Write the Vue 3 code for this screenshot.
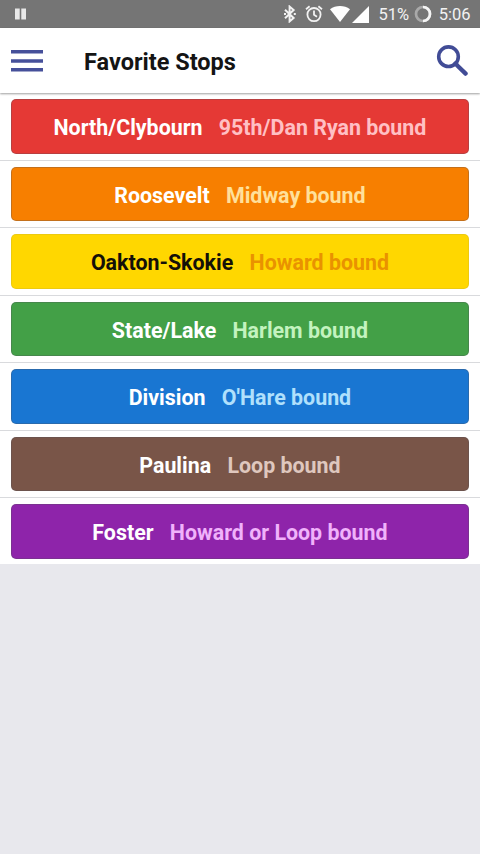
<script setup>
const stops = [
  { name: 'North/Clybourn', bound: '95th/Dan Ryan bound', line: 'red' },
  { name: 'Roosevelt', bound: 'Midway bound', line: 'orange' },
  { name: 'Oakton-Skokie', bound: 'Howard bound', line: 'yellow' },
  { name: 'State/Lake', bound: 'Harlem bound', line: 'green' },
  { name: 'Division', bound: "O'Hare bound", line: 'blue' },
  { name: 'Paulina', bound: 'Loop bound', line: 'brown' },
  { name: 'Foster', bound: 'Howard or Loop bound', line: 'purple' },
]
</script>

<template>
  <div class="screen">
    <div class="status">
      <svg class="pause" width="12" height="12" viewBox="0 0 12 12"><path d="M0 .5h4.7v11H0zM6.3.5H11v11H6.3z" /></svg>
      <div class="indicators">
        <svg class="bluetooth" width="12" height="18" viewBox="0 0 12 18"><path d="M1 4.8l8.6 8.2L5.6 16.4V1.6L9.6 5 1 13.2" /><path d="M0 9h2M9.8 9h2" /></svg>
        <svg class="alarm" width="18" height="18" viewBox="0 0 18 18">
          <circle cx="9" cy="9.6" r="6.6" /><path d="M9 5.6v4.2l3 2M1 4.2L4.6 1.2M17 4.2l-3.6-3" />
        </svg>
        <svg class="wifi" width="20" height="16" viewBox="0 0 20 16"><path d="M0 3.2C5.6-1 14.4-1 20 3.2L10 16z" /></svg>
        <svg class="signal" width="17" height="17" viewBox="0 0 17 17"><path d="M17 0v17H0z" /></svg>
        <span class="percent">51%</span>
        <svg class="battery" width="18" height="18" viewBox="0 0 18 18">
          <circle class="track" cx="9" cy="9" r="7" /><path d="M9 2a7 7 0 0 1 0 14" />
        </svg>
        <span class="clock">5:06</span>
      </div>
    </div>
    <header class="bar">
      <svg class="menu" width="32" height="22" viewBox="0 0 32 22"><path d="M0 0h32v3.5H0zM0 9.2h32v3.5H0zM0 18h32v3.5H0z" /></svg>
      <h1>Favorite Stops</h1>
      <svg class="search" width="32" height="32" viewBox="0 0 32 32">
        <circle cx="12.5" cy="11.7" r="9.8" /><path class="handle" d="M19.4 18.6l2 2M21 20.2l8.6 8.4" />
      </svg>
    </header>
    <ul class="list">
      <li v-for="stop in stops" :key="stop.name">
        <div class="stop" :class="stop.line">
          <span>{{ stop.name }}</span>
          <span class="bound">{{ stop.bound }}</span>
        </div>
      </li>
    </ul>
  </div>
</template>

<style>
body { margin: 0; background: #e8e8ed; }
</style>

<style scoped>
.screen { width: 480px; height: 854px; overflow: hidden; background: #e8e8ed; font-family: Roboto, sans-serif; }
svg { display: block; flex: none; }
.status { box-sizing: border-box; height: 28px; padding: 0 9.5px 0 15px; display: flex; align-items: center; justify-content: space-between; background: #757575; color: #f2f2f2; }
.pause { fill: #e8e8e8; }
.indicators { display: flex; align-items: center; font-size: 16.5px; line-height: 28px; }
.bluetooth { margin-right: 8.5px; fill: none; stroke: #f2f2f2; stroke-width: 2; }
.alarm { margin-right: 7px; fill: none; stroke: #f2f2f2; stroke-width: 1.8; }
.wifi, .signal { fill: #fff; }
.wifi { margin-right: 2px; }
.signal { margin-right: 10px; }
.percent, .clock { padding-top: 2px; }
.battery { margin: 0 7px 0 4.5px; fill: none; stroke: #f5f5f5; stroke-width: 2.7; }
.track { stroke: #a9a9a9; }
.bar { position: relative; box-sizing: border-box; height: 65px; padding: 0 12px 0 11px; display: flex; align-items: center; background: #fff; box-shadow: 0 1px 2px rgba(0, 0, 0, 0.38); }
.menu { fill: #46509a; }
h1 { flex: 1; margin: 3px 0 0 41px; font-size: 23.5px; line-height: 28px; font-weight: 700; color: #141414; }
.search { fill: none; stroke: #414c96; stroke-width: 3.6; }
.handle { stroke-width: 4.3; stroke-linecap: round; }
.list { margin: 0; padding: 0; list-style: none; background: #fff; }
li { box-sizing: border-box; height: 67.5px; padding: 6px 11.5px 6px 11.4px; border-bottom: 1px solid #d9dadd; }
li:last-child { height: 66px; padding-bottom: 5.5px; border-bottom: 0; }
.stop { box-sizing: border-box; height: 54.5px; border-radius: 5px; padding-top: 3.5px; border: 1px solid rgba(80, 80, 90, 0.3); display: flex; align-items: center; justify-content: center; gap: 16.3px; font-size: 21.4px; font-weight: 700; line-height: 28px; color: #fff; white-space: nowrap; }
.red { background: #e53935; }
.red .bound { color: #ffc0c4; }
.orange { background: #f77f00; }
.orange .bound { color: #ffe09a; }
.yellow { background: #ffd700; color: #141008; border-color: rgba(160, 150, 80, 0.2); }
.yellow .bound { color: #e99200; }
.green { background: #43a047; }
.green .bound { color: #c3f3bf; }
.blue { background: #1976d2; }
.blue .bound { color: #b0e0fc; }
.brown { background: #795548; }
.brown .bound { color: #dfc7be; }
.purple { background: #8e24aa; }
.purple .bound { color: #f0b2fb; }
</style>
